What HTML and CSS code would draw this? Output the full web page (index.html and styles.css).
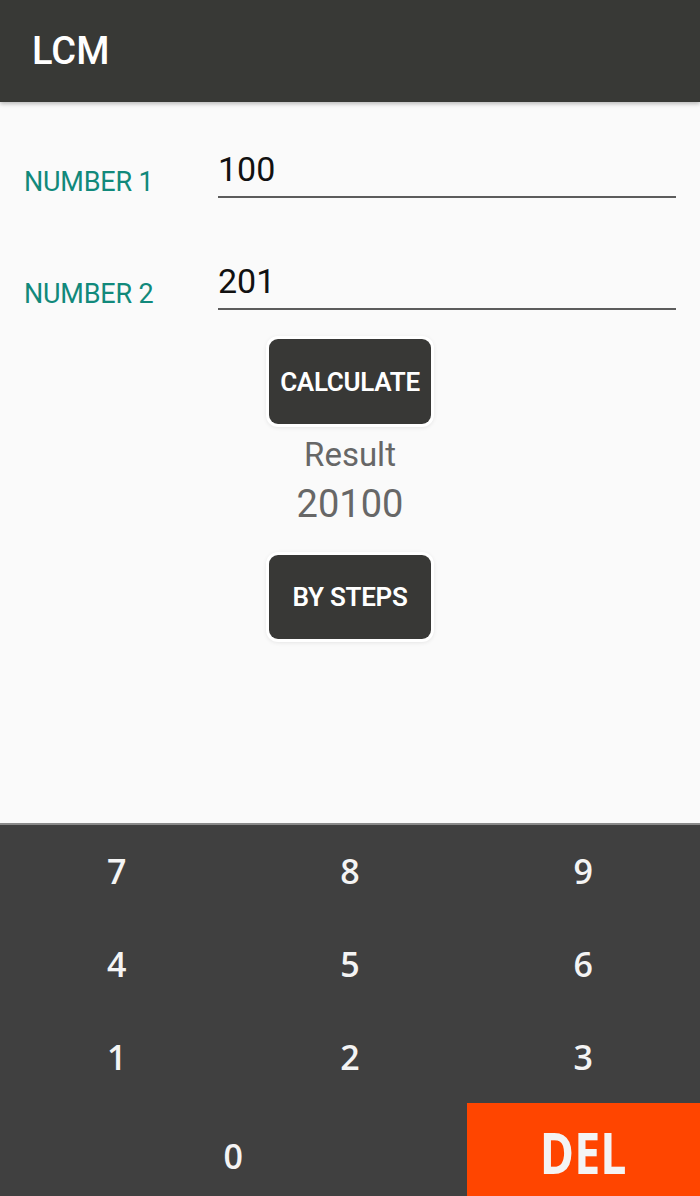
FILE: index.html
```html
<!DOCTYPE html>
<html lang="en">
<head>
    <meta charset="UTF-8">
    <meta name="viewport" content="width=device-width, initial-scale=1.0">
    <title>LCM</title>
    <link rel="stylesheet" href="styles.css">
</head>
<body>
    <div class="app">
        <header class="toolbar">
            <h1>LCM</h1>
        </header>

        <main class="content">
            <div class="field-row">
                <label class="field-label" for="num1">NUMBER 1</label>
                <div class="field-input" id="num1">100</div>
            </div>
            <div class="field-row">
                <label class="field-label" for="num2">NUMBER 2</label>
                <div class="field-input" id="num2">201</div>
            </div>

            <div class="actions">
                <button type="button" class="dark-btn">CALCULATE</button>
                <div class="result-label">Result</div>
                <div class="result-value">20100</div>
                <button type="button" class="dark-btn steps">BY STEPS</button>
            </div>
        </main>

        <section class="keypad">
            <button type="button" class="key">7</button>
            <button type="button" class="key">8</button>
            <button type="button" class="key">9</button>
            <button type="button" class="key">4</button>
            <button type="button" class="key">5</button>
            <button type="button" class="key">6</button>
            <button type="button" class="key">1</button>
            <button type="button" class="key">2</button>
            <button type="button" class="key">3</button>
            <button type="button" class="key zero">0</button>
            <button type="button" class="key del"><span>DEL</span></button>
        </section>
    </div>
</body>
</html>
```

FILE: styles.css
```css
body {
    margin: 0;
    padding: 0;
    background-color: #fafafa;
    font-family: Roboto, "Noto Sans", sans-serif;
}
.app {
    width: 700px;
    height: 1196px;
    display: flex;
    flex-direction: column;
    overflow: hidden;
}
.toolbar {
    height: 102px;
    background-color: #383936;
    box-shadow: 0 2px 4px rgba(0,0,0,0.25); /* app bar elevation */
    display: flex;
    align-items: center;
    padding-left: 32px;
    position: relative;
    z-index: 1;
}
.toolbar h1 {
    margin: 0;
    color: #fff;
    font-size: 38px;
    font-weight: 500;
    margin-top: 0;
}
.content {
    flex: 1;
    padding-top: 47px;
}
.field-row {
    display: flex;
    align-items: flex-end;
    margin-bottom: 63px;
}
.field-row + .field-row {
    margin-bottom: 0;
}
.field-label {
    width: 194px;
    padding-left: 24px;
    padding-bottom: 1px;
    color: #11897b;
    font-size: 27px;
    line-height: 30px;
    letter-spacing: -0.2px;
}
.field-input {
    flex: 1;
    margin-right: 24px;
    font-size: 34px;
    line-height: 40px;
    color: #111;
    padding-bottom: 7px;
    border-bottom: 2px solid #5c5c5c;
}
.actions {
    display: flex;
    flex-direction: column;
    align-items: center;
    padding-top: 29px;
}
.dark-btn {
    width: 162px;
    height: 85px;
    background-color: #383836;
    color: #fff;
    border: none;
    border-radius: 9px;
    font-family: Roboto, sans-serif;
    font-size: 26px;
    font-weight: 600;
    letter-spacing: -0.3px;
    padding: 0;
    box-shadow: 0 0 0 3px #fff, 0 1px 5px 2px rgba(0,0,0,0.12);
}
.result-label {
    margin-top: 12px;
    color: #676767;
    font-size: 33px;
    line-height: 38px;
}
.result-value {
    margin-top: 8px;
    color: #676767;
    font-size: 38px;
    line-height: 44px;
}
.steps {
    margin-top: 29px;
    height: 84px;
}
.keypad {
    height: 373px;
    box-sizing: border-box;
    background-color: #404040;
    border-top: 2px solid #8a8a8a;
    display: grid;
    grid-template-columns: repeat(3, 1fr);
    grid-template-rows: repeat(4, 1fr);
}
.key {
    background: none;
    border: none;
    color: #f4f4f4;
    font-family: "Open Sans", sans-serif;
    font-size: 34px;
    font-weight: 600;
    padding: 0;
}
.zero {
    grid-column: span 2;
    padding-top: 12px;
}
.del {
    background-color: #ff4500;
    font-size: 58px;
    font-weight: 700;
    padding-top: 4px;
}
.del span {
    display: inline-block;
    transform: scaleX(0.8);
}
```
